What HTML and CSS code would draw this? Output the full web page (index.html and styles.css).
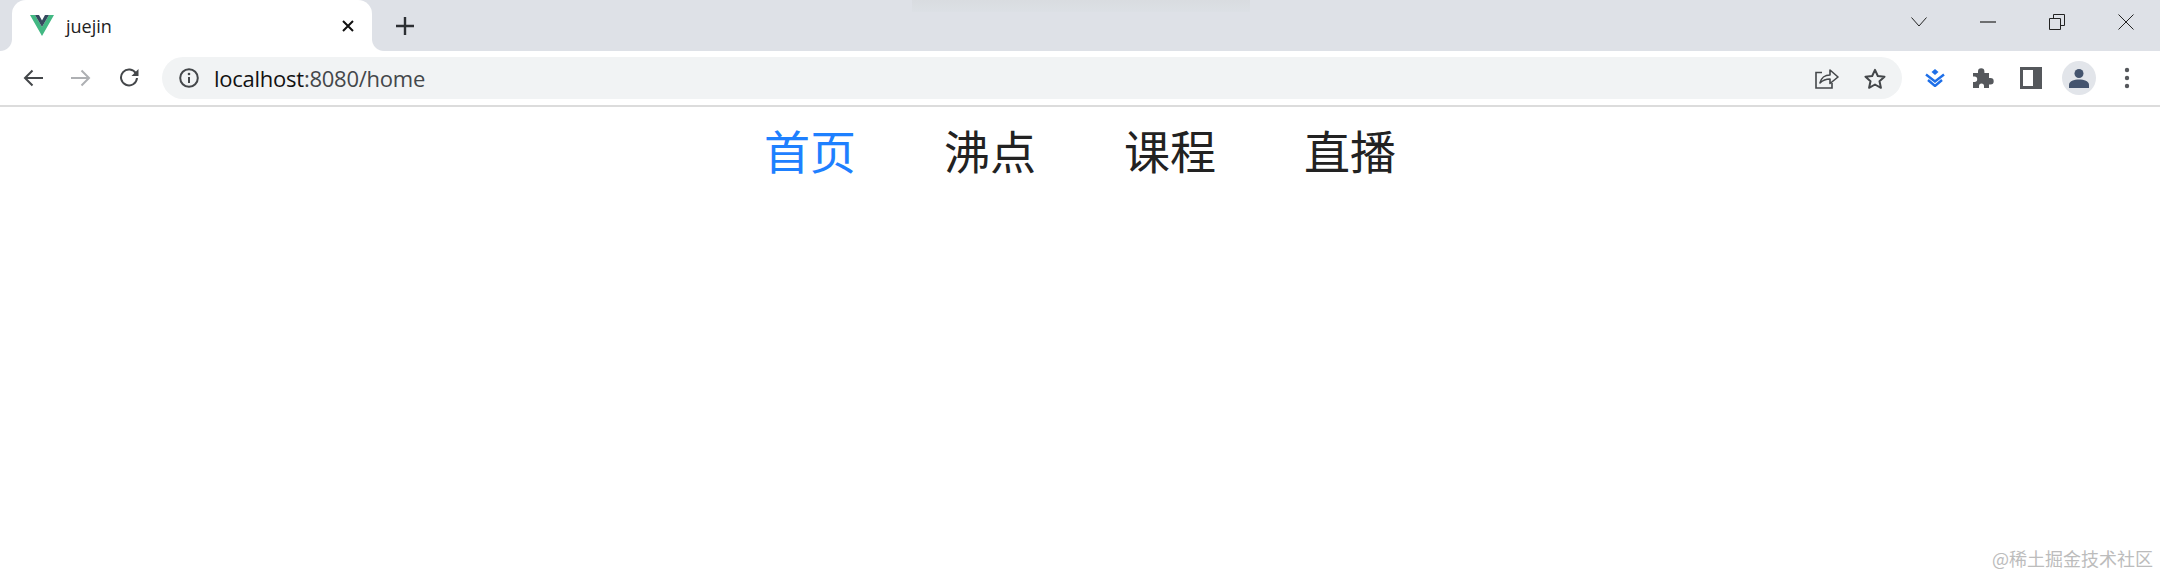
FILE: index.html
```html
<!DOCTYPE html>
<html lang="zh-CN">
<head>
    <meta charset="UTF-8">
    <meta name="viewport" content="width=device-width, initial-scale=1.0">
    <title>juejin</title>
    <link rel="stylesheet" href="styles.css">
</head>
<body>

    <div class="tab-strip">
        <div class="tab">
            <svg class="tab-logo" width="24" height="21" viewBox="0 0 24 21">
                <polygon points="0,0 5,0 12,12 19,0 24,0 12,21" fill="#42b883"/>
                <polygon points="5,0 9,0 12,5.500 15,0 19,0 12,12" fill="#35495e"/>
            </svg>
            <span class="tab-title">juejin</span>
            <svg class="tab-close" width="12" height="12" viewBox="0 0 12 12">
                <path d="M1 1l10 10M11 1L1 11" stroke="#111" stroke-width="2" fill="none"/>
            </svg>
        </div>
        <svg class="new-tab" width="18" height="18" viewBox="0 0 18 18">
            <path d="M9 0v18M0 9h18" stroke="#2c2f33" stroke-width="2.400" fill="none"/>
        </svg>
        <div class="strip-shade"></div>
        <div class="window-controls">
            <svg width="16" height="10" viewBox="0 0 16 10"><path d="M.5 .5L8 9l7.500-8.500" stroke="#222" stroke-width="1" fill="none"/></svg>
            <svg width="16" height="2" viewBox="0 0 16 2"><path d="M0 1h16" stroke="#222" stroke-width="1.200"/></svg>
            <svg width="16" height="16" viewBox="0 0 16 16"><path d="M.5 4.500h11v11H.5zM4.500 4.500V.5h11v11h-4" stroke="#222" stroke-width="1" fill="none"/></svg>
            <svg width="16" height="16" viewBox="0 0 16 16"><path d="M.5 .5l15 15M15.500 .5l-15 15" stroke="#222" stroke-width="1" fill="none"/></svg>
        </div>
    </div>

    <div class="toolbar">
        <div class="nav-buttons">
            <svg width="20" height="18" viewBox="0 0 20 18"><path d="M20 9H2M9.500 1.500L2 9l7.500 7.500" stroke="#44474a" stroke-width="2" fill="none"/></svg>
            <svg width="20" height="18" viewBox="0 0 20 18"><path d="M0 9h18M10.500 1.500L18 9l-7.500 7.500" stroke="#aeb0b3" stroke-width="2" fill="none"/></svg>
            <svg width="20" height="20" viewBox="0 0 20 20"><path d="M17 5.500A8 8 0 1 0 18 10" stroke="#44474a" stroke-width="2" fill="none"/><path d="M19.500 1v7h-7z" fill="#44474a"/></svg>
        </div>
        <div class="omnibox">
            <svg class="info-icon" width="20" height="20" viewBox="0 0 20 20">
                <circle cx="10" cy="10" r="8.800" stroke="#44474a" stroke-width="2" fill="none"/>
                <path d="M10 9v6" stroke="#44474a" stroke-width="2"/>
                <circle cx="10" cy="6" r="1.300" fill="#44474a"/>
            </svg>
            <span class="url"><span class="url-host">localhost</span>:8080/home</span>
            <div class="omnibox-actions">
                <svg width="24" height="22" viewBox="0 0 24 22"><path d="M7 5.500H1v15.500h16v-5" stroke="#44474a" stroke-width="1.600" fill="none"/><path d="M5 16c1-5 5-8 10-8V3l8 7-8 6.500V12c-4 0-7 1-10 4z" stroke="#44474a" stroke-width="1.600" fill="none" stroke-linejoin="round"/></svg>
                <svg width="22" height="21" viewBox="0 0 22 21"><path d="M11 1.800l2.800 6.200 6.700 .7-5 4.500 1.400 6.600L11 16.500l-5.900 3.300 1.400-6.600-5-4.500 6.700-.7z" stroke="#44474a" stroke-width="2" fill="none" stroke-linejoin="round"/></svg>
            </div>
        </div>
        <div class="extensions">
            <svg width="20" height="18" viewBox="0 0 20 18"><path d="M10 0l3.500 3L10 6 6.500 3z" fill="#1e6fe8"/><path d="M1 5.500l9 7 9-7M3 11l7 6 7-6" stroke="#1e6fe8" stroke-width="2.400" fill="none"/></svg>
            <svg width="22" height="22" viewBox="0 0 22 22"><path d="M1 6h5V4.500a3.200 3.200 0 0 1 6.400 0V6H17v5h1.500a3.200 3.200 0 0 1 0 6.400H17V21h-5v-2a2.500 2.500 0 0 0-5 0v2H1v-6h1.500a2.700 2.700 0 0 0 0-5.400H1z" fill="#55585c"/></svg>
            <svg width="22" height="22" viewBox="0 0 22 22"><rect x="1.500" y="1.500" width="19" height="19" fill="#fff" stroke="#55585c" stroke-width="3"/><rect x="13" y="1" width="8" height="20" fill="#55585c"/></svg>
            <div class="avatar">
                <svg width="20" height="20" viewBox="0 0 20 20"><circle cx="10" cy="5.500" r="4.500" fill="#44546e"/><path d="M0 20v-3c0-4 5-5.500 10-5.500S20 13 20 17v3z" fill="#44546e"/></svg>
            </div>
            <svg width="6" height="22" viewBox="0 0 6 22"><circle cx="3" cy="3" r="2.200" fill="#55585c"/><circle cx="3" cy="11" r="2.200" fill="#55585c"/><circle cx="3" cy="19" r="2.200" fill="#55585c"/></svg>
        </div>
    </div>

    <ul class="menu">
        <li class="menu-item active">首页</li>
        <li class="menu-item">沸点</li>
        <li class="menu-item">课程</li>
        <li class="menu-item">直播</li>
    </ul>

    <div class="watermark">@稀土掘金技术社区</div>

</body>
</html>
```

FILE: styles.css
```css
body {
    margin: 0;
    height: 576px;
    overflow: hidden;
    background-color: #fff;
    font-family: "Open Sans", "Noto Sans CJK SC", sans-serif;
}
.tab-strip {
    height: 51px;
    background-color: #dee1e7;
    display: flex;
    align-items: flex-start;
    padding-left: 12px;
    position: relative;
}
.tab {
    width: 360px;
    height: 51px;
    flex-shrink: 0;
    box-sizing: border-box;
    padding: 0 18px;
    background: #fff;
    border-radius: 14px 14px 0 0;
    display: flex;
    align-items: center;
    position: relative;
}
.tab::before,
.tab::after {
    content: "";
    position: absolute;
    bottom: 0;
    width: 12px;
    height: 12px;
}
.tab::before {
    left: -12px;
    background: radial-gradient(circle at 0 0, #dee1e7 11.500px, #fff 12.500px);
}
.tab::after {
    right: -12px;
    background: radial-gradient(circle at 100% 0, #dee1e7 11.500px, #fff 12.500px);
}
.tab-logo {
    margin-right: 12px;
    flex-shrink: 0;
}
.tab-title {
    font-size: 18px;
    color: #222;
}
.tab-close {
    margin-left: auto;
}
.new-tab {
    margin: 17px 0 0 24px;
}
.strip-shade {
    position: absolute;
    left: 912px;
    top: 0;
    width: 338px;
    height: 12px;
    background: linear-gradient(#d9dce0, #dce0e5);
}
.window-controls {
    margin-left: auto;
    height: 44px;
    display: grid;
    grid-auto-flow: column;
    grid-auto-columns: 69px;
    align-items: center;
    justify-items: center;
}
.toolbar {
    height: 54px;
    display: flex;
    align-items: center;
    background: #fff;
    border-bottom: 2px solid #dcdcdc;
}
.nav-buttons {
    display: flex;
    align-items: center;
    gap: 28px;
    padding-left: 23px;
    width: 162px;
    flex-shrink: 0;
    box-sizing: border-box;
}
.omnibox {
    width: 1740px;
    height: 42px;
    flex-shrink: 0;
    box-sizing: border-box;
    background: #f1f3f4;
    border-radius: 21px;
    display: flex;
    align-items: center;
    padding: 0 16px 0 17px;
}
.info-icon {
    flex-shrink: 0;
}
.url {
    font-size: 22px;
    color: #44474a;
    margin-left: 15px;
    letter-spacing: -0.25px;
}
.url-host {
    color: #111;
}
.omnibox-actions {
    margin-left: auto;
    display: flex;
    align-items: center;
    gap: 25px;
}
.extensions {
    display: grid;
    grid-auto-flow: column;
    grid-auto-columns: 48px;
    align-items: center;
    justify-items: center;
    margin-left: 9px;
}
.avatar {
    width: 34px;
    height: 34px;
    border-radius: 50%;
    background: #e2e5ea;
    display: flex;
    align-items: flex-end;
    justify-content: center;
    overflow: hidden;
}
.avatar svg {
    margin-bottom: 7px;
}
.menu {
    list-style: none;
    margin: 0;
    padding: 0;
    display: flex;
    justify-content: center;
    gap: 88px;
}
.menu-item {
    font-family: "Noto Sans CJK SC", sans-serif;
    font-size: 46px;
    line-height: 84px;
    color: #222;
}
.menu-item.active {
    color: #1e80ff;
}
.watermark {
    position: absolute;
    right: 7px;
    bottom: 6px;
    font-family: "Noto Sans CJK SC", sans-serif;
    font-size: 18px;
    line-height: 24px;
    color: #bcbcbc;
}
```
